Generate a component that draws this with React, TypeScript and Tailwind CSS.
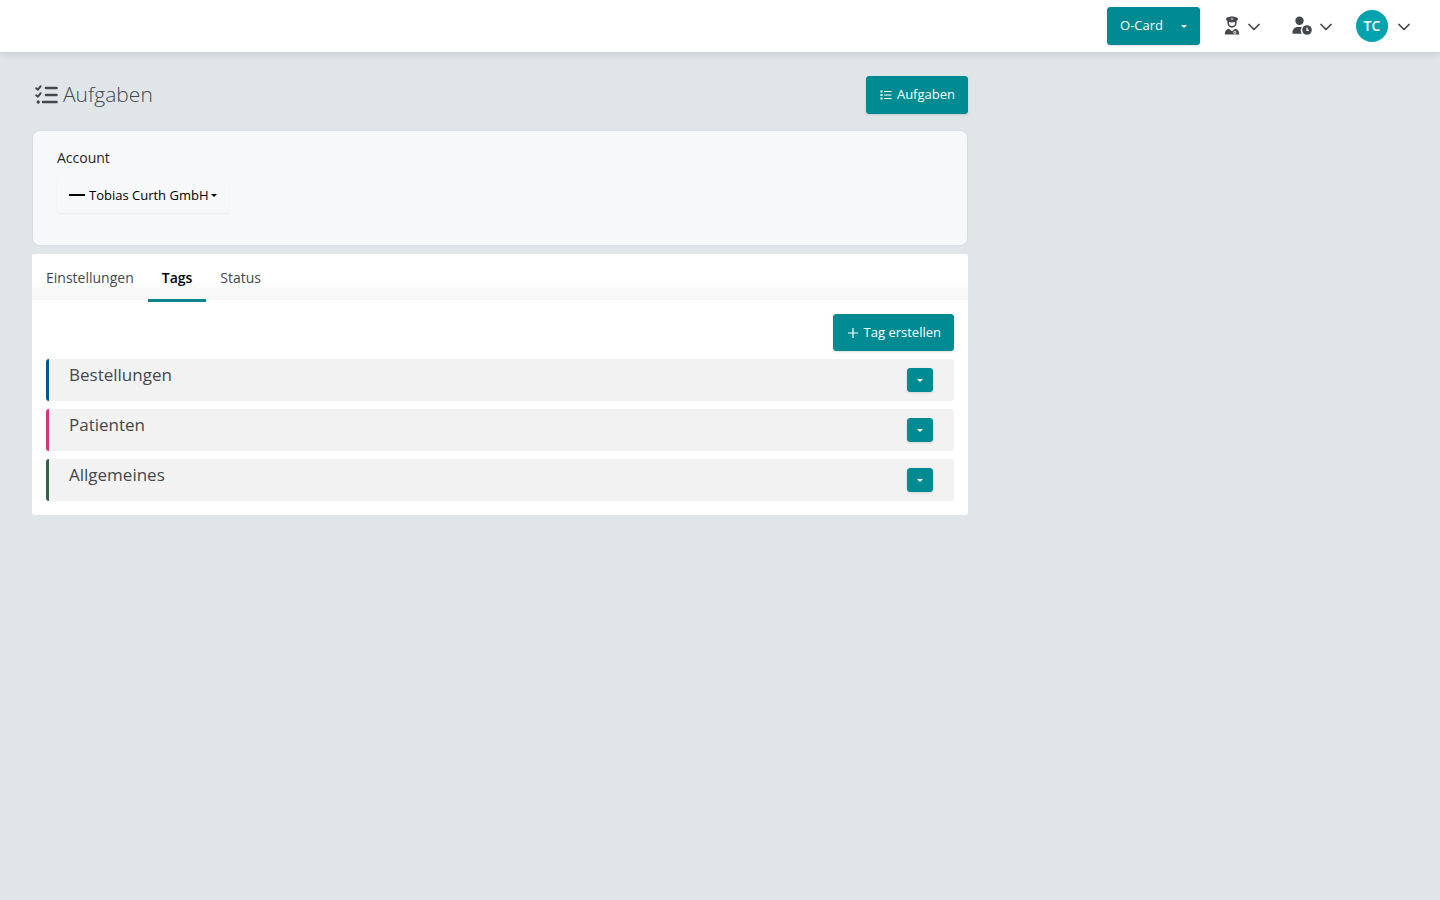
import { useState } from 'react';

const TEAL = 'bg-[#008a91] text-white border border-[#008a91] rounded-[3px] shadow-sm cursor-pointer hover:bg-[#007a80]';

const TABS = ['Einstellungen', 'Tags', 'Status'];

interface TagGroup {
  name: string;
  color: string;
}

const TAG_GROUPS: TagGroup[] = [
  { name: 'Bestellungen', color: 'border-[#00558c]' },
  { name: 'Patienten', color: 'border-[#d63384]' },
  { name: 'Allgemeines', color: 'border-[#33614a]' },
];

function Caret() {
  return (
    <svg width="6" height="3" viewBox="0 0 6 3" fill="currentColor" aria-hidden="true">
      <path d="M0 0h6L3 3z" />
    </svg>
  );
}

function Chevron() {
  return (
    <svg width="12" height="8" viewBox="0 0 12 8" className="mt-0.5" fill="none" stroke="currentColor" strokeWidth="1.7" strokeLinecap="round" strokeLinejoin="round" aria-hidden="true">
      <path d="M1 1.500l5 5 5-5" />
    </svg>
  );
}

function OfficerIcon() {
  return (
    <svg width="16" height="20" viewBox="0 0 16 20" aria-hidden="true">
      <path fill="currentColor" d="M2 3C2 1.600 5 .6 8 .6S14 1.600 14 3c0 .9-.8 1.500-1.400 1.900v2.200a4.600 4.600 0 0 1-9.200 0V4.900C2.800 4.500 2 3.900 2 3z" />
      <path fill="#fff" d="M5 6c2 .5 4 .5 6 0v1a3 3 0 0 1-6 0z" />
      <path fill="#fff" d="M6.500 2.500h3L8 4z" />
      <path fill="currentColor" d="M.8 18.600c0-3.800 1.400-5.400 4.200-5.800l3 2.400 3-2.400c2.800.4 4.200 2 4.200 5.800z" />
      <circle cx="10.800" cy="16.400" r="1.100" fill="none" stroke="#fff" strokeWidth=".9" />
    </svg>
  );
}

function UserClockIcon() {
  return (
    <svg width="20" height="20" viewBox="0 0 20 20" aria-hidden="true">
      <circle cx="7.500" cy="4.800" r="4.200" fill="currentColor" />
      <path fill="currentColor" d="M.5 17.800v-1.400c0-3.200 2.300-5.400 5.400-5.400h3.200c.3 0 .6 0 .9.100a5.800 5.800 0 0 0-.2 6.700z" />
      <circle cx="15" cy="14" r="4.800" fill="currentColor" />
      <path fill="none" stroke="#fff" strokeWidth="1.200" d="M15 11.500V14.400h2" />
    </svg>
  );
}

function TasksIcon() {
  return (
    <svg width="24" height="20" viewBox="0 0 24 20" fill="none" stroke="currentColor" strokeLinecap="round" strokeLinejoin="round" aria-hidden="true">
      <path strokeWidth="2.600" d="M11 3h10.500M11 10h10.500M8 17h13.500" />
      <path strokeWidth="1.900" d="M1.200 3.200l1.700 1.500L5.700 1.200M1.200 10.200l1.700 1.500L5.700 8.200" />
      <circle cx="3.200" cy="17" r="1.700" fill="currentColor" stroke="none" />
    </svg>
  );
}

function ListIcon() {
  return (
    <svg width="14" height="10" viewBox="0 0 14 10" aria-hidden="true">
      <path stroke="currentColor" strokeWidth="1.200" d="M5 1.500h7.500M5 5h7.500M5 8.500h7.500" />
      <path fill="currentColor" d="M1.500.5h2v2h-2zM1.500 4h2v2h-2zM1.500 7.500h2v2h-2z" />
    </svg>
  );
}

export default function App() {
  const [activeTab, setActiveTab] = useState('Tags');

  return (
    <div className="min-h-screen bg-[#e0e6e8] font-['Open_Sans',sans-serif] text-[13px] text-[#44484c]">
      <header className="flex h-13 items-center justify-end bg-white pr-[30px] shadow-[0_2px_8px_rgba(0,0,0,0.12)]">
        <button className={`${TEAL} flex h-[38px] items-center gap-[18px] px-3 font-medium`}>
          <span>O-Card</span>
          <Caret />
        </button>
        <button aria-label="Team" className="ml-6 flex cursor-pointer items-center gap-2">
          <OfficerIcon />
          <Chevron />
        </button>
        <button aria-label="Anwesenheit" className="ml-8 flex cursor-pointer items-center gap-2">
          <UserClockIcon />
          <Chevron />
        </button>
        <button className="ml-6 flex cursor-pointer items-center gap-[10px]">
          <span className="flex size-8 items-center justify-center rounded-full bg-[#00a3ad] text-sm font-semibold text-white">TC</span>
          <Chevron />
        </button>
      </header>

      <main className="ml-8 w-[65%] pt-6">
        <div className="mb-4 flex items-center justify-between">
          <h1 className="flex items-center gap-1 pl-[3px] text-[21px] font-light">
            <TasksIcon />
            Aufgaben
          </h1>
          <button className={`${TEAL} flex h-[38px] items-center gap-1 px-3 font-medium`}>
            <ListIcon />
            Aufgaben
          </button>
        </div>

        {/* Account picker */}
        <section className="mb-2 rounded-lg border border-[#d8dee1] bg-[#f7f8fa] px-6 pt-4 pb-8 text-sm text-[#212529]">
          <label htmlFor="account" className="block leading-[22px]">Account</label>
          <div className="mt-2 flex h-9 w-fit items-center rounded-[3px] px-3 text-[13px] text-black shadow-xs">
            <span className="mr-1 h-0.5 w-4 bg-black" />
            <select id="account" className="mr-0.5 cursor-pointer appearance-none bg-transparent">
              <option>Tobias Curth GmbH</option>
            </select>
            <Caret />
          </div>
        </section>

        <section className="rounded-[3px] bg-white">
          <div role="tablist" className="flex h-[46px] rounded-t-[3px] bg-linear-to-b from-white from-50% to-[#f6f6f6] text-sm">
            {TABS.map((tab) => (
              <button
                key={tab}
                role="tab"
                aria-selected={activeTab === tab}
                onClick={() => setActiveTab(tab)}
                className={`h-12 cursor-pointer border-b-3 px-[14px] pt-0.5 ${
                  activeTab === tab ? 'border-[#0b868d] font-semibold text-black' : 'border-transparent font-medium'
                }`}
              >
                {tab}
              </button>
            ))}
          </div>

          <div className="p-[14px]">
            <div className="mb-2 flex justify-end">
              <button className={`${TEAL} flex h-[37px] items-center gap-1 px-3 font-medium`}>
                <svg width="14" height="10" viewBox="0 0 14 10" stroke="currentColor" strokeWidth="1.200" aria-hidden="true">
                  <path d="M7 0v10M2 5h10" />
                </svg>
                Tag erstellen
              </button>
            </div>

            <ul className="space-y-2">
              {TAG_GROUPS.map((group) => (
                <li
                  key={group.name}
                  className={`flex h-[42px] items-start justify-between rounded-[3px] border-l-3 bg-[#f2f2f2] pr-[21px] pl-5 ${group.color}`}
                >
                  <span className="pt-1 text-[17px] leading-6">{group.name}</span>
                  <button
                    aria-label={`Optionen für ${group.name}`}
                    className={`${TEAL} mt-[9px] flex h-6 w-[26px] items-center justify-center`}
                  >
                    <Caret />
                  </button>
                </li>
              ))}
            </ul>
          </div>
        </section>
      </main>
    </div>
  );
}
